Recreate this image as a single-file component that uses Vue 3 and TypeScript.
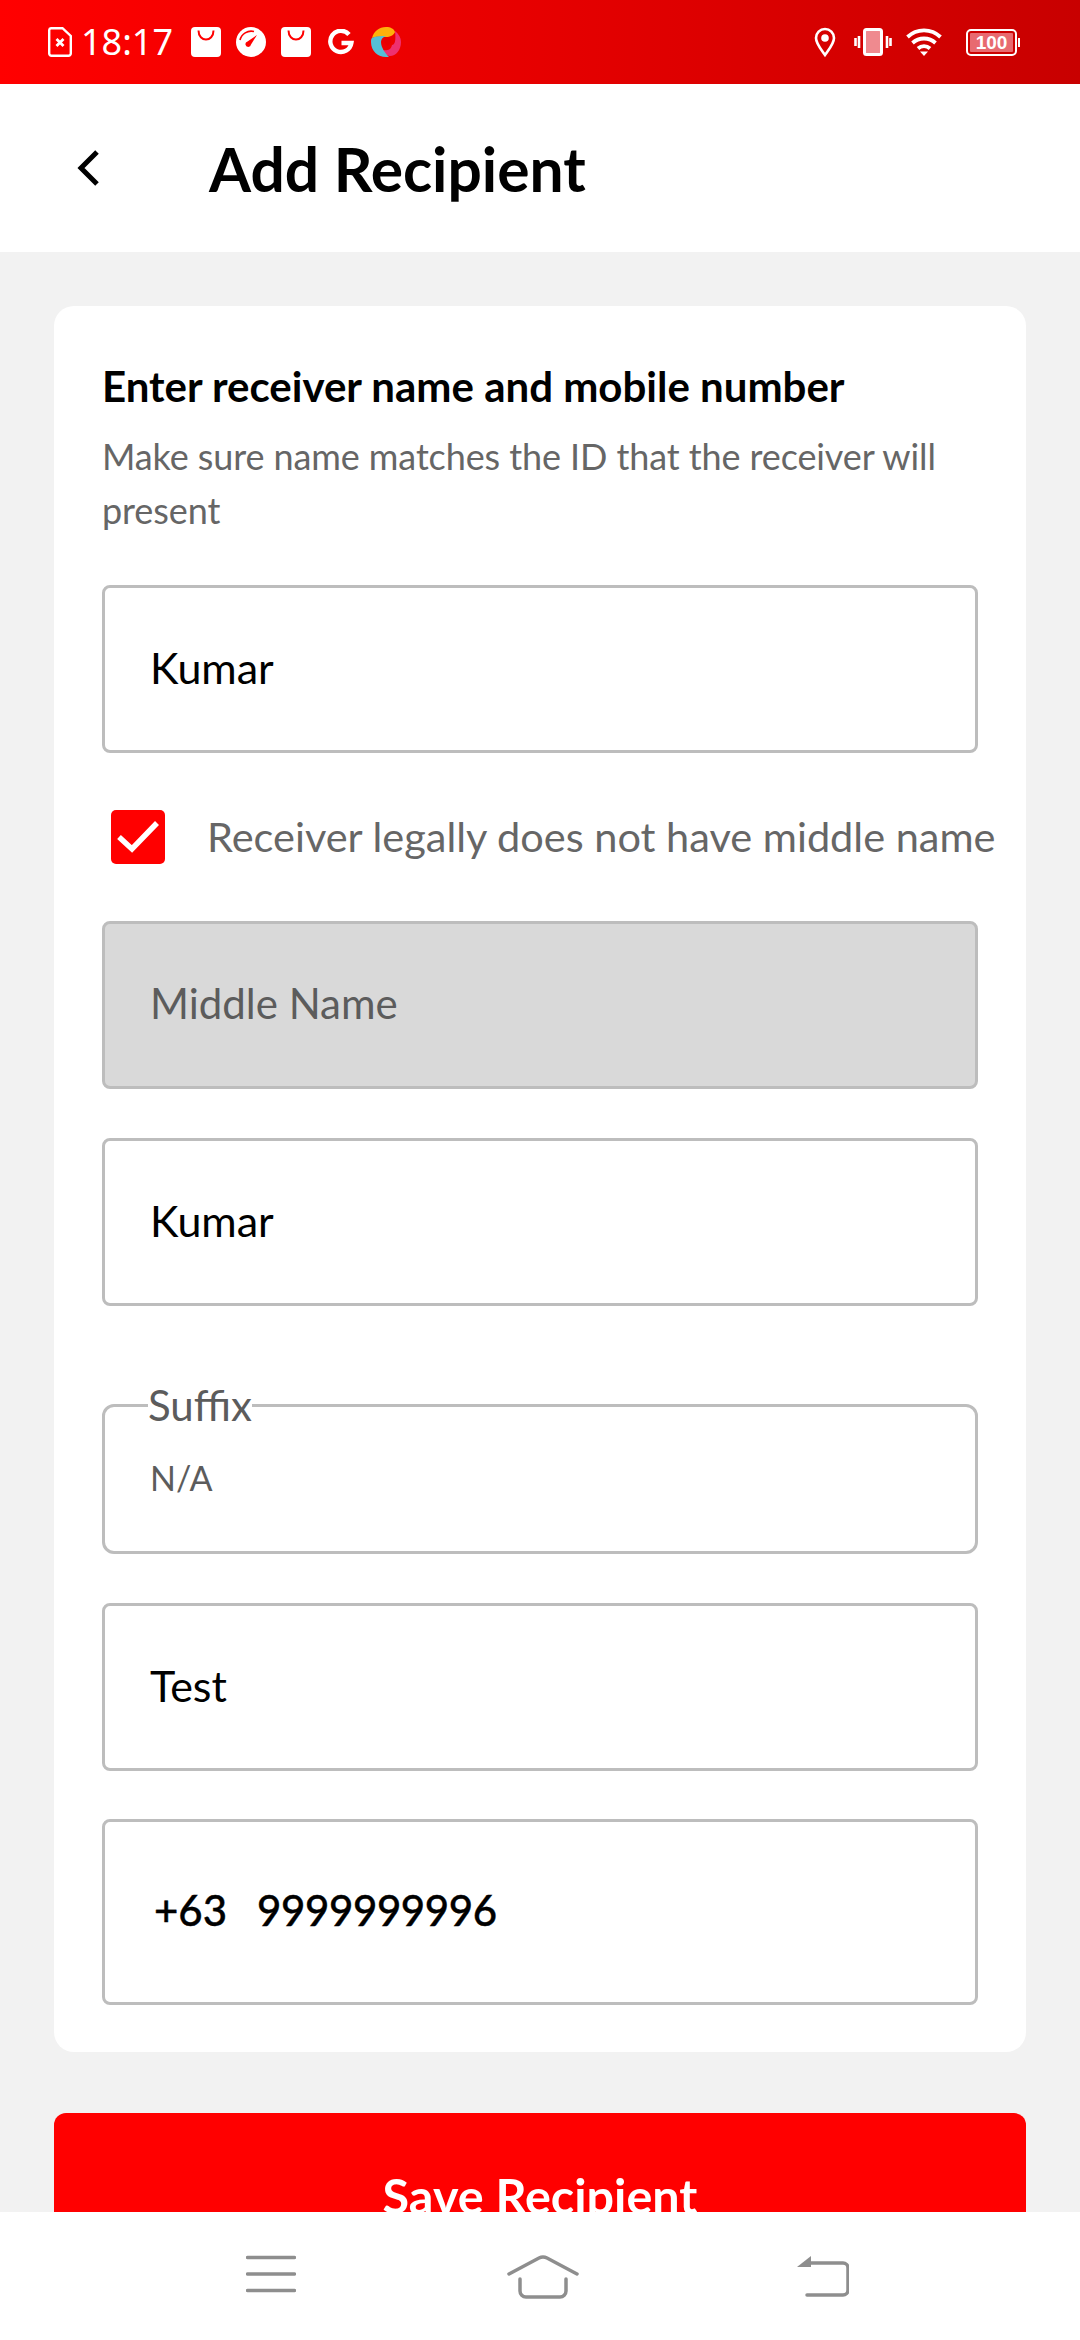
<template>
  <div class="page">
    <!-- status bar -->
    <div class="status">
      <svg class="doc" width="24" height="30" viewBox="0 0 24 30" fill="none">
        <path d="M3 1.200h11.500L22.800 9v17.500a2.300 2.300 0 0 1-2.300 2.300H3.500a2.300 2.300 0 0 1-2.300-2.300V3a2 2 0 0 1 1.800-1.800z" stroke="#fff" stroke-width="2.400"/>
        <path d="M8.500 12l7 7M15.500 12l-7 7" stroke="#fff" stroke-width="2.800"/>
      </svg>
      <span class="time">18:17</span>
      <svg class="ic-first" width="30" height="30" viewBox="0 0 30 30">
        <rect width="30" height="30" rx="4" fill="#fff"/>
        <path d="M7.500 3.500c0 12 15 12 15 0" fill="none" stroke="#f00" stroke-width="2"/>
      </svg>
      <svg class="ic" width="30" height="30" viewBox="0 0 30 30">
        <circle cx="15" cy="15" r="15" fill="#fff"/>
        <path d="M4 13A11.500 11.500 0 0 1 18 4.500" fill="none" stroke="#f00" stroke-width="1.600"/>
        <path d="M21 8l-6 9.500a2.800 2.800 0 1 1-3.500-3z" fill="#f00"/>
      </svg>
      <svg class="ic" width="30" height="30" viewBox="0 0 30 30">
        <rect width="30" height="30" rx="4" fill="#fff"/>
        <path d="M7.500 3.500c0 12 15 12 15 0" fill="none" stroke="#f00" stroke-width="2"/>
      </svg>
      <svg class="ic-g" width="26" height="26" viewBox="0 0 26 26">
        <path d="M21 5.500A10.600 10.600 0 1 0 23.400 14H13.500" fill="none" stroke="#fff" stroke-width="4.400"/>
      </svg>
      <svg class="ic-g" width="30" height="30" viewBox="0 0 30 30">
        <path d="M1 11C3 4 8 0 15 0c5 0 8 2 9 5-1 3-5 5-9 5-5 0-10-1-14 1z" fill="#fdb10b"/>
        <path d="M24 4c4 3 6 7 6 11 0 8-5 14-11 14-3 0-6-3-8-6 5 1 9 0 10-5 3 0 4-5 3-14z" fill="#ee3070"/>
        <path d="M15 9c-3 1-5 3-5 6 0 6 5 12 8 15-2 0-2 0-3 0C7 30 0 24 0 15c0-2 0-3 1-4 4-2 9-2 14-2z" fill="#55bfd6"/>
        <path d="M14 10.500a4.600 4.600 0 0 1 6 5l-3 3.500a6 6 0 0 1-3-8.500z" fill="#e60000"/>
      </svg>
      <div class="spacer"></div>
      <svg width="22" height="31" viewBox="0 0 22 31" fill="none">
        <path d="M11 28C6 21 2 16.500 2 11a9 9 0 0 1 18 0c0 5.500-4 10-9 17z" stroke="#fff" stroke-width="2.600"/>
        <circle cx="11" cy="11" r="3.800" fill="#fff"/>
      </svg>
      <svg class="ic-vib" width="38" height="28" viewBox="0 0 38 28">
        <rect x="10.500" y="1.500" width="17" height="25" rx="2" fill="#ef8a8f" stroke="#fff" stroke-width="3"/>
        <path d="M5 8v12M1.500 10v8M33 8v12M36.500 10v8" stroke="#fff" stroke-width="2.600"/>
      </svg>
      <svg class="ic-wifi" width="36" height="28" viewBox="0 0 36 28" fill="none">
        <path d="M1.500 9a24 24 0 0 1 33 0M6.500 15a17 17 0 0 1 23 0M12 20.500a9 9 0 0 1 12 0" stroke="#fff" stroke-width="3.800"/>
        <path d="M14 23.500h8L18 28z" fill="#fff"/>
      </svg>
      <div class="battery">
        <span class="battery-body"><span class="battery-fill">100</span></span>
        <span class="battery-tip"></span>
      </div>
    </div>

    <!-- header -->
    <header class="topbar">
      <svg class="back" width="24" height="38" viewBox="0 0 24 38" fill="none">
        <path d="M21 3L5 19l16 16" stroke="#000" stroke-width="5"/>
      </svg>
      <h1>Add Recipient</h1>
    </header>

    <main class="content">
      <section class="card">
        <h2>Enter receiver name and mobile number</h2>
        <p class="hint">Make sure name matches the ID that the receiver will present</p>

        <div class="field field--first">Kumar</div>

        <div class="check-row">
          <span class="checkbox">
            <svg width="42" height="34" viewBox="0 0 42 34" fill="none">
              <path d="M2 17l13 12L40 3" stroke="#fff" stroke-width="5.500"/>
            </svg>
          </span>
          <span class="check-label">Receiver legally does not have middle name</span>
        </div>

        <div class="field field--disabled">Middle Name</div>
        <div class="field">Kumar</div>

        <fieldset class="suffix">
          <legend>Suffix</legend>
          <span>N/A</span>
        </fieldset>

        <div class="field">Test</div>
        <div class="field field--phone">
          <span class="code">+63</span>
          <span class="number">9999999996</span>
        </div>
      </section>

      <button class="save">Save Recipient</button>
    </main>

    <!-- android nav bar -->
    <nav class="navbar">
      <svg width="50" height="38" viewBox="0 0 50 38" fill="none">
        <path d="M1.500 2.500h47M1.500 19h47M1.500 35.500h47" stroke="#8e8e8e" stroke-width="3.500" stroke-linecap="round"/>
      </svg>
      <svg width="72" height="44" viewBox="0 0 72 44" fill="none">
        <path d="M2 19L32 3q4-2 8 0l30 16" stroke="#8e8e8e" stroke-width="3.500" stroke-linecap="round"/>
        <path d="M13 24v12a6 6 0 0 0 6 6h34a6 6 0 0 0 6-6V24" stroke="#8e8e8e" stroke-width="3.500" stroke-linecap="round"/>
      </svg>
      <svg width="52" height="42" viewBox="0 0 52 42" fill="none">
        <path d="M12 8h34a5 5 0 0 1 5 5v22a5 5 0 0 1-5 5H10" stroke="#8e8e8e" stroke-width="3.500" stroke-linecap="round"/>
        <path d="M14 1v11H0z" fill="#8e8e8e"/>
      </svg>
    </nav>
  </div>
</template>

<script setup lang="ts">
</script>

<style>
html, body { margin: 0; padding: 0; }
</style>

<style scoped>
.page {
  width: 1080px;
  height: 2340px;
  display: flex;
  flex-direction: column;
  overflow: hidden;
  background: #f2f2f2;
  font-family: Lato, "Liberation Sans", sans-serif;
}

.status {
  height: 84px;
  flex-shrink: 0;
  display: flex;
  align-items: center;
  padding: 0 60px 0 48px;
  box-sizing: border-box;
  background: linear-gradient(90deg, #ff0000 0%, #e60000 50%, #c80000 100%);
}
.time {
  margin-left: 9px;
  font-family: "Noto Sans", sans-serif;
  font-size: 36px;
  color: #fff;
  line-height: 1;
}
.ic-first { margin-left: 18px; }
.ic { margin-left: 15px; }
.ic-g { margin-left: 17px; }
.spacer { flex: 1; }
.ic-vib { margin-left: 18px; }
.ic-wifi { margin-left: 14px; }
.battery {
  margin-left: 24px;
  display: flex;
  align-items: center;
}
.battery-body {
  width: 51px;
  height: 27px;
  box-sizing: border-box;
  border: 2px solid #fff;
  border-radius: 5px;
  padding: 2px;
  display: flex;
}
.battery-fill {
  flex: 1;
  background: #e86a70;
  border-radius: 1px;
  color: #fff;
  font-family: "Liberation Sans", sans-serif;
  font-weight: 700;
  font-size: 19px;
  line-height: 19px;
  text-align: center;
}
.battery-tip {
  width: 2px;
  height: 9px;
  margin-left: 1px;
  background: #fff;
}

.topbar {
  height: 168px;
  flex-shrink: 0;
  display: flex;
  align-items: center;
  background: #fff;
  padding-left: 76px;
  box-sizing: border-box;
}
.topbar h1 {
  margin: 0 0 0 109px;
  font-size: 60.500px;
  font-weight: 700;
  color: #000;
}

.content {
  flex: 1;
  min-height: 0;
  overflow: hidden;
  padding: 54px 54px 0;
}
.card {
  background: #fff;
  border-radius: 20px;
  padding: 55px 48px 47px;
  box-sizing: border-box;
}
.card h2 {
  margin: 0;
  font-size: 42px;
  line-height: 50px;
  font-weight: 700;
  color: #000;
}
.hint {
  margin: 18px 0 0;
  font-size: 36px;
  line-height: 54px;
  letter-spacing: -0.1px;
  color: #666;
}

.field {
  height: 168px;
  margin-top: 49px;
  box-sizing: border-box;
  border: 3px solid #bdbdbd;
  border-radius: 8px;
  padding: 0 0 4px 45px;
  display: flex;
  align-items: center;
  font-size: 43px;
  color: #000;
}
.field--first { margin-top: 48px; }
.field--disabled {
  margin-top: 0;
  background: #d9d9d9;
  font-size: 42px;
  color: #5c5c5c;
}
.field--phone {
  height: 186px;
  margin-top: 48px;
  padding-left: 49px;
  font-size: 42px;
  font-weight: 500;
  -webkit-text-stroke: 0.4px #000;
}
.code { margin-right: 30px; }
.number { letter-spacing: -0.4px; }

.check-row {
  display: flex;
  align-items: center;
  height: 168px;
  padding-left: 9px;
  white-space: nowrap;
}
.checkbox {
  width: 54px;
  height: 54px;
  flex-shrink: 0;
  border-radius: 5px;
  background: #f00;
  display: flex;
  align-items: center;
  justify-content: center;
}
.checkbox svg { width: 42px; height: 34px; }
.check-label {
  margin: 0 0 2px 42px;
  font-size: 41.500px;
  color: #666;
}

.suffix {
  margin: 75px 0 0;
  height: 173px;
  box-sizing: border-box;
  border: 3px solid #bdbdbd;
  border-radius: 12px;
  padding: 0 0 0 45px;
  min-width: 0;
  font-size: 34px;
  color: #5c5c5c;
}
.suffix legend {
  padding: 0;
  margin-left: -2px;
  font-size: 42px;
  line-height: 48px;
  color: #5c5c5c;
}
.suffix span {
  display: block;
  margin-top: 27px;
  line-height: 44px;
}

.save {
  display: block;
  width: 100%;
  height: 168px;
  margin-top: 61px;
  padding: 0 0 4px;
  border: 0;
  border-radius: 12px;
  background: #f00;
  color: #fff;
  font-family: inherit;
  font-size: 48.500px;
  font-weight: 700;
}

.navbar {
  height: 128px;
  flex-shrink: 0;
  background: #fff;
  display: flex;
  justify-content: space-between;
  align-items: flex-start;
  padding: 43px 231px 0 246px;
  box-sizing: border-box;
}
.navbar svg:nth-child(2) { margin-left: -7px; }
</style>
